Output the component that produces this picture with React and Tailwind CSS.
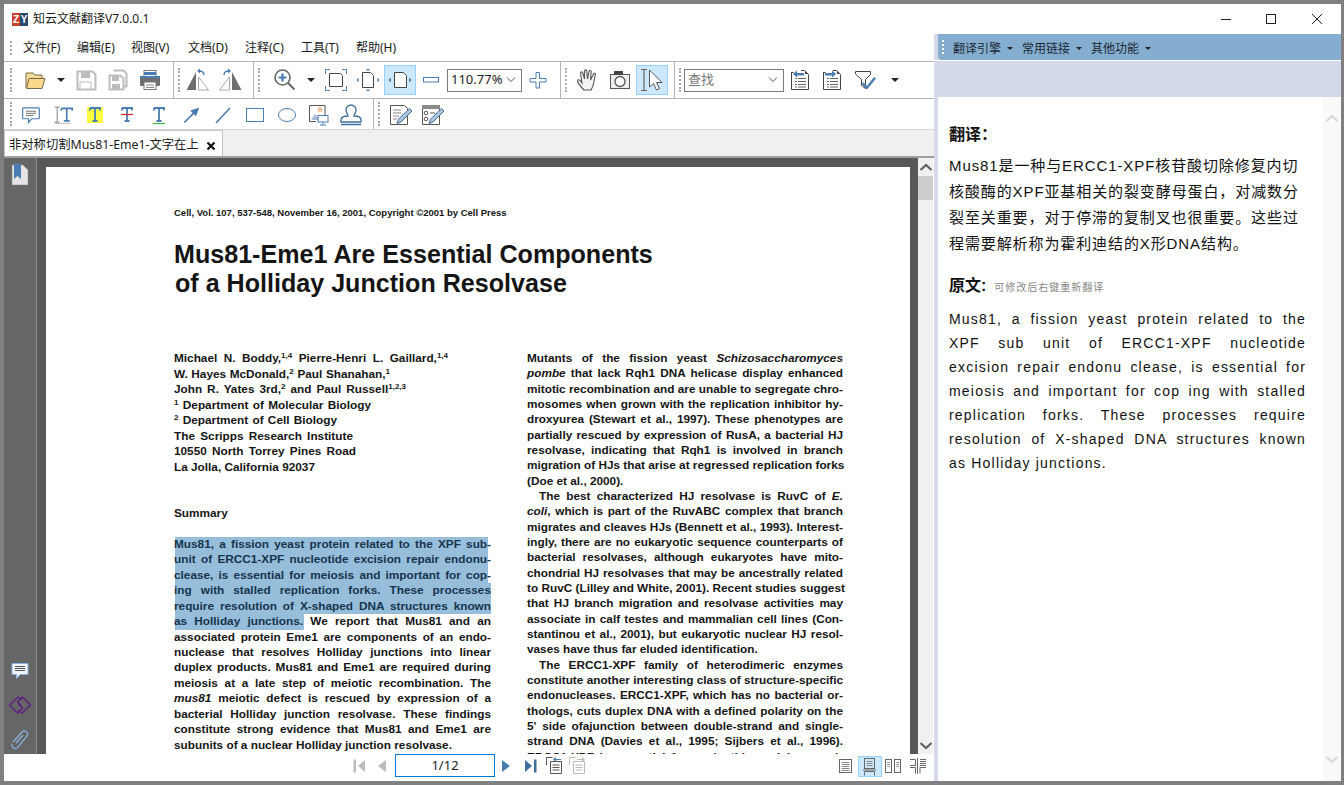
import React from "react";

const B = "#4a7db3";

function Ico({ children, w = 24, h = 24, s, className = "" }) {
  return (
    <svg width={s || w} height={s || h} viewBox={`0 0 ${w} ${h}`} fill="none" className={className}>
      {children}
    </svg>
  );
}

const Grip = ({ className = "" }) => (
  <div className={`h-[24px] w-0 shrink-0 border-l-2 border-dotted border-[#a8a8a8] ${className}`} />
);
const Sep = () => <div className="w-[1px] self-stretch shrink-0 bg-[#b4b4b4]" />;
const Caret = () => (
  <div className="flex h-[30px] w-[19px] shrink-0 items-center justify-center">
    <div className="h-0 w-0 border-x-[4px] border-t-[4px] border-x-transparent border-t-[#222]" />
  </div>
);
const Btn = ({ children, active }) => (
  <div
    className={`flex h-[30px] w-[32px] shrink-0 items-center justify-center ${
      active ? "border border-[#99d1ff] bg-[#cce8ff]" : ""
    }`}
  >
    {children}
  </div>
);

const IOpen = () => (
  <Ico>
    <path d="M3 20V5h7l2 2h7v3" stroke="#7a6a48" fill="#f3dc9a" strokeWidth="1" />
    <path d="M3.500 20.500 6 10.500h16l-3 10z" fill="#fbd98a" stroke="#7a6a48" strokeWidth="1" />
  </Ico>
);
const ISave = ({ c = "#bdbdbd" }) => (
  <Ico>
    <path d="M3.500 3.500h15l3 3v15h-18z" stroke={c} strokeWidth="2" />
    <rect x="7" y="4" width="9" height="6" fill={c} />
    <rect x="6" y="14" width="11" height="7" fill="#fff" stroke={c} />
  </Ico>
);
const ISaveAll = () => (
  <Ico>
    <path d="M7.500 2.500h10l3 3v13h-3" stroke="#bdbdbd" strokeWidth="2" />
    <path d="M3.500 7.500h11l3 3v11h-14z" stroke="#bdbdbd" strokeWidth="2" fill="#fff" />
    <rect x="6" y="8" width="7" height="5" fill="#bdbdbd" />
    <rect x="6" y="16" width="8" height="5" fill="#bdbdbd" />
  </Ico>
);
const IPrint = () => (
  <Ico>
    <rect x="6" y="2.500" width="12" height="6" fill="#fff" stroke="#777" />
    <rect x="6" y="4" width="12" height="3" fill={B} />
    <rect x="2" y="8" width="20" height="10" rx="1.500" fill="#6f6f6f" />
    <rect x="2" y="8" width="20" height="2" fill={B} />
    <rect x="6" y="14" width="12" height="7.500" fill="#fff" stroke="#777" />
    <path d="M8 17h8M8 19.500h8" stroke="#888" />
  </Ico>
);
const IRot = ({ flip }) => (
  <Ico w={26} h={26}>
    <g transform={flip ? "matrix(-1 0 0 1 26 0)" : undefined}>
      <path d="M11 5v18H1.500z" fill="#6e6e6e" />
      <path d="M13.500 10v13h10z" fill="#fff" stroke="#aaa" />
      <path d="M19 8c0-3-2-4-5-4" stroke={B} strokeWidth="1.300" />
      <path d="M15 1.500 12 4l3 2.500z" fill={B} />
    </g>
  </Ico>
);
const IZoom = () => (
  <Ico>
    <circle cx="9.500" cy="9.500" r="7.500" stroke="#666" strokeWidth="1.600" fill="#fff" />
    <path d="M5.500 9.500h8M9.500 5.500v8" stroke={B} strokeWidth="2.200" />
    <path d="m15 15 6.500 6.500" stroke="#666" strokeWidth="2" />
  </Ico>
);
const IFit = () => (
  <Ico>
    <path d="M7 5.500h9.500l2 2v11H5.500V5.500z" stroke="#444" fill="#fff" />
    <path d="M1.500 6V1.500H6M18 1.500h4.500V6M22.500 18v4.500H18M6 22.500H1.500V18" stroke={B} />
  </Ico>
);
const IFitH = () => (
  <Ico>
    <path d="M6.500 4.500h8l3 3v12h-11z" stroke="#444" fill="#fff" />
    <path d="M12 .5 9.500 2.500h5zM12 23.500l-2.500-2h5zM.5 12l2-2.500v5zM23.500 12l-2-2.500v5z" fill={B} />
  </Ico>
);
const IFitW = () => (
  <Ico>
    <path d="M6.500 4.500h9l3 3v12h-12z" stroke="#444" fill="#fff" />
    <path d="M.5 12l2.500-2.500v5zM23.500 12l-2.500-2.500v5z" fill={B} />
  </Ico>
);
const IMinus = () => (
  <Ico w={20} h={10}>
    <rect x="1.500" y="2.500" width="15" height="4.500" fill="#fff" stroke={B} />
  </Ico>
);
const IPlus = () => (
  <Ico w={18} h={18}>
    <path d="M6.500 1h3.500v6h6.500v3.500H10v6H6.500v-6H.5V7h6z" fill="#fff" stroke={B} transform="translate(.5 .5)" />
  </Ico>
);
const IHand = () => (
  <Ico>
    <path
      d="M8 22c-2-2-6-7-6.500-9 0-1.500 1.500-1.500 2.500-.5l2 2.500L4.500 5c0-1.500 2-1.500 2.300 0L8.500 11 8.500 3c0-1.500 2.200-1.500 2.300 0l.7 8L13 3.500c.3-1.500 2.300-1.200 2.200.3L14.500 12l3-6c.7-1.300 2.300-.7 1.800.7L17.500 16c-.5 2.500-1.500 4-2.500 6z"
      fill="#f4f4f4"
      stroke="#555"
      strokeWidth="1.100"
    />
  </Ico>
);
const ICam = () => (
  <Ico>
    <rect x="2.500" y="6.500" width="19" height="14" fill="#eee" stroke="#555" />
    <rect x="6" y="3" width="9" height="4" fill="#444" />
    <circle cx="12" cy="13.500" r="5" fill="#fff" stroke="#555" strokeWidth="1.300" />
  </Ico>
);
const ISel = () => (
  <Ico w={26} h={26}>
    <path d="M2 2.500h6M2 23.500h6M5 2.500v21" stroke="#666" strokeWidth="1.200" />
    <path d="M10.500 3v17l4-3.500 3 6.500 3-1.500-3-6H23z" fill="#fff" stroke="#555" />
  </Ico>
);
const IDoc = ({ right }) => (
  <Ico w={20} h={22}>
    <path d="M1.500 3.500h2M11 1.500h3.500l4 4v15h-17V3" stroke="#444" fill="#fff" />
    <path d="M15 1.500v3.500h3.500z" fill="#444" />
    <path d="M5 9.500h11M5 12.500h11M5 15.500h11M5 18h11" stroke="#666" strokeDasharray="2 1 8" />
    <path d={right ? "M3 4h7V1.500L14 5l-4 3.500V6.500H3z" : "M14 4H7V1.500L3 5l4 3.500V6.500h7z"} fill={B} />
  </Ico>
);
const IFilter = () => (
  <Ico w={24} h={22}>
    <path d="M.5 2.500h15v3l-5 5v9l-4-3v-6l-6-5.500z" fill="#fff" stroke="#444" transform="translate(1 0)" />
    <path d="m9 13 4 4 7-9 2 1.500-9 11-5-5z" fill={B} />
  </Ico>
);
const INote = () => (
  <Ico s={20}>
    <path d="M3 3.500h18a1 1 0 0 1 1 1v11a1 1 0 0 1-1 1H13l-4 4.500v-4.500H3a1 1 0 0 1-1-1v-11a1 1 0 0 1 1-1z" fill="#fff" stroke={B} strokeWidth="1.400" />
    <path d="M6 7.500h12M6 10h12M6 12.500h9" stroke="#555" />
  </Ico>
);
const IIText = () => (
  <Ico w={24} h={24} s={20}>
    <path d="M2 2.500h6M2 20.500h6M5 3v17" stroke="#6a6a6a" />
    <path d="M10 4h13v3M16.500 4v15M13 19h7M10 7V4" stroke={B} strokeWidth="2" />
    <path d="M2 22h20" stroke="#6a6a6a" strokeDasharray="1 1" />
  </Ico>
);
const ITee = ({ c = B }) => (
  <path d="M7 5h10v2.500M7 5v2.500M12 5v13M9.500 18h5" stroke={c} strokeWidth="1.800" />
);
const IHi = () => (
  <div className="flex h-[16px] w-[16px] items-center justify-center bg-[#ffff40]">
    <Ico w={16} h={16}>
      <g transform="translate(-4 -4)"><ITee /></g>
    </Ico>
  </div>
);
const IStrike = () => (
  <Ico>
    <ITee />
    <path d="M6 11.500h12" stroke="#e02020" strokeWidth="1.200" />
  </Ico>
);
const IUnder = () => (
  <Ico>
    <ITee />
    <path d="M6 20.500h12" stroke="#3cb043" strokeWidth="1.200" />
  </Ico>
);
const IArrow = () => (
  <Ico s={20}>
    <path d="m4 21 13-13" stroke={B} strokeWidth="2" />
    <path d="M22 3 11 6.500l7 7z" fill={B} />
  </Ico>
);
const ILine = () => (
  <Ico>
    <path d="m5 20 14-15" stroke={B} strokeWidth="1.600" />
  </Ico>
);
const IRect = () => (
  <Ico>
    <rect x="3.500" y="5.500" width="17" height="13" stroke={B} />
  </Ico>
);
const IEll = () => (
  <Ico>
    <ellipse cx="12" cy="12" rx="8.500" ry="6.500" stroke={B} />
  </Ico>
);
const IImg = () => (
  <Ico>
    <path d="M2.500 2.500h15.500v11M9 18.500H2.500v-16" stroke="#555" fill="#fff" />
    <circle cx="13" cy="6.500" r="2.500" fill="#efc49b" />
    <path d="M4 17l4-6 3 4v2z" fill="#a5bfd8" />
    <rect x="11" y="12.500" width="10" height="6.500" fill="#fff" stroke={B} />
    <path d="M16 19v3M13 22h6" stroke={B} />
  </Ico>
);
const IStamp = () => (
  <Ico>
    <path d="M9 13c0-2-2-3-2-6a5 5 0 0 1 10 0c0 3-2 4-2 6 3 0 7 1 7 4v2H2v-2c0-3 4-4 7-4z" fill="#fff" stroke="#3d6f9c" strokeWidth="1.300" />
    <path d="M2 21.500h20" stroke="#3d6f9c" strokeWidth="1.500" />
  </Ico>
);
const IEdit = ({ form }) => (
  <Ico>
    <path d="M2.500 2.500h14l3 3v16h-17z" fill="#fff" stroke="#555" />
    {form ? (
      <>
        <rect x="2" y="2" width="18" height="4" fill="#8a8a8a" />
        <circle cx="6" cy="10" r="1.800" stroke="#555" />
        <circle cx="6" cy="16" r="1.800" stroke="#555" />
        <path d="M10 10h5" stroke="#555" />
      </>
    ) : (
      <path d="M5 7h8M5 10h8M5 13h6M5 16h4" stroke="#888" />
    )}
    <path d="M21.500 5.500 24 8 13 19l-4 1.500L10.500 16z" fill="#a9c5e2" stroke="#4a6f96" />
  </Ico>
);

const Combo = ({ w, children, gray }) => (
  <div
    className={`flex h-[23px] shrink-0 items-center justify-between border border-[#7a7a7a] pl-[3px] pr-[3px] text-[13px] ${
      gray ? "text-[#777]" : "text-[#222]"
    } ${w}`}
  >
    <span>{children}</span>
    <svg width="14" height="8" viewBox="0 0 14 8" fill="none">
      <path d="m3 1.500 4 4 4-4" stroke="#555" />
    </svg>
  </div>
);

function L({ children, last, indent, hl, dark }) {
  return (
    <div
      className={`relative h-[15.4px] whitespace-nowrap leading-[15.4px] ${last ? "" : "[text-align-last:justify]"} ${
        indent ? "pl-[12px]" : ""
      } ${dark ? "text-[#17344d]" : ""}`}
    >
      {hl ? <div className="absolute left-[1px] top-0 h-full bg-[#96bdd9]" style={{ width: hl }} /> : null}
      <span className="relative">{children}</span>
    </div>
  );
}

const S = ({ children }) => <sup className="text-[8px]">{children}</sup>;

function Page() {
  return (
    <div className="h-full overflow-hidden bg-white pl-[128px] font-['Liberation_Sans',Arial,sans-serif] font-bold text-[#151515]">
      <div className="pt-[41px] text-[9.500px] leading-[10px]">
        Cell, Vol. 107, 537-548, November 16, 2001, Copyright ©2001 by Cell Press
      </div>
      <div className="mt-[22px] text-[25.100px] leading-[29px]">
        <div>Mus81-Eme1 Are Essential Components</div>
        <div className="pl-[1px]">of a Holliday Junction Resolvase</div>
      </div>
      <div className="mt-[53px] flex text-[11.800px]">
        <div className="w-[317px]">
          <div className="w-[274px] [&>div]:h-[15.55px] [&>div]:leading-[15.55px]">
            <L>
              Michael N. Boddy,<S>1,4</S> Pierre-Henri L. Gaillard,<S>1,4</S>
            </L>
            <div className="w-[216px] whitespace-nowrap [text-align-last:justify]">
              W. Hayes McDonald,<S>2</S> Paul Shanahan,<S>1</S>
            </div>
            <div className="w-[232px] whitespace-nowrap [text-align-last:justify]">
              John R. Yates 3rd,<S>2</S> and Paul Russell<S>1,2,3</S>
            </div>
            <div className="w-[197px] whitespace-nowrap [text-align-last:justify]"><S>1</S> Department of Molecular Biology</div>
            <div className="w-[163px] whitespace-nowrap [text-align-last:justify]"><S>2</S> Department of Cell Biology</div>
            <div className="w-[179px] [text-align-last:justify]">The Scripps Research Institute</div>
            <div className="w-[182px] [text-align-last:justify]">10550 North Torrey Pines Road</div>
            <div>La Jolla, California 92037</div>
          </div>
          <div className="mt-[31px] leading-[15.400px]">Summary</div>
          <div className="mt-[15px] [&>div]:h-[15.46px] [&>div]:leading-[15.46px]">
            <L dark hl={313}>Mus81, a fission yeast protein related to the XPF sub-</L>
            <L dark hl={313}>unit of ERCC1-XPF nucleotide excision repair endonu-</L>
            <L dark hl={313}>clease, is essential for meiosis and important for cop-</L>
            <L dark hl={316}>ing with stalled replication forks. These processes</L>
            <L dark hl={316}>require resolution of X-shaped DNA structures known</L>
            <L hl={129}><span className="text-[#17344d]">as Holliday junctions.</span> We report that Mus81 and an</L>
            <L>associated protein Eme1 are components of an endo-</L>
            <L>nuclease that resolves Holliday junctions into linear</L>
            <L>duplex products. Mus81 and Eme1 are required during</L>
            <L>meiosis at a late step of meiotic recombination. The</L>
            <L><i>mus81</i> meiotic defect is rescued by expression of a</L>
            <L>bacterial Holliday junction resolvase. These findings</L>
            <L>constitute strong evidence that Mus81 and Eme1 are</L>
            <L last>subunits of a nuclear Holliday junction resolvase.</L>
          </div>
        </div>
        <div className="ml-[36px] w-[316px] [&>div]:h-[15.33px] [&>div]:leading-[15.33px]">
          <L>Mutants of the fission yeast <i>Schizosaccharomyces</i></L>
          <L><i>pombe</i> that lack Rqh1 DNA helicase display enhanced</L>
          <L>mitotic recombination and are unable to segregate chro-</L>
          <L>mosomes when grown with the replication inhibitor hy-</L>
          <L>droxyurea (Stewart et al., 1997). These phenotypes are</L>
          <L>partially rescued by expression of RusA, a bacterial HJ</L>
          <L>resolvase, indicating that Rqh1 is involved in branch</L>
          <L>migration of HJs that arise at regressed replication forks</L>
          <L last>(Doe et al., 2000).</L>
          <L indent>The best characterized HJ resolvase is RuvC of <i>E.</i></L>
          <L><i>coli</i>, which is part of the RuvABC complex that branch</L>
          <L>migrates and cleaves HJs (Bennett et al., 1993). Interest-</L>
          <L>ingly, there are no eukaryotic sequence counterparts of</L>
          <L>bacterial resolvases, although eukaryotes have mito-</L>
          <L>chondrial HJ resolvases that may be ancestrally related</L>
          <L>to RuvC (Lilley and White, 2001). Recent studies suggest</L>
          <L>that HJ branch migration and resolvase activities may</L>
          <L>associate in calf testes and mammalian cell lines (Con-</L>
          <L>stantinou et al., 2001), but eukaryotic nuclear HJ resol-</L>
          <L last>vases have thus far eluded identification.</L>
          <L indent>The ERCC1-XPF family of heterodimeric enzymes</L>
          <L>constitute another interesting class of structure-specific</L>
          <L>endonucleases. ERCC1-XPF, which has no bacterial or-</L>
          <L>thologs, cuts duplex DNA with a defined polarity on the</L>
          <L>5' side ofajunction between double-strand and single-</L>
          <L>strand DNA (Davies et al., 1995; Sijbers et al., 1996).</L>
          <L>ERCC1-XPF is essential for nucleotide excision repair</L>
        </div>
      </div>
    </div>
  );
}

const Arrow = ({ dir, c, bar }) => (
  <Ico w={14} h={16}>
    <g transform={dir === "l" ? "matrix(-1 0 0 1 14 0)" : undefined}>
      <path d={bar ? "M1 2l7 6-7 6z" : "M3 2l8 6-8 6z"} fill={c} />
      {bar ? <path d="M10 1.500h2.500v13H10z" fill={c} /> : null}
    </g>
  </Ico>
);

const PageCopy = ({ c, left }) => (
  <Ico w={18} h={18}>
    <path d="M1.500 9V1.500h6" stroke={c} />
    <path d="M5.500 5.500h11v12h-11z" stroke={c} fill="#fff" />
    <path d="M7.500 9h7M7.500 11.500h7M7.500 14h7" stroke={c} />
    <path d={left ? "M16 3h-5V1L8 3.500 11 6V4h5z" : "M9 3h5V1l3 2.500L14 6V4H9z"} fill={left ? B : "#bbb"} />
  </Ico>
);

const ViewIcon = ({ kind }) => (
  <Ico w={18} h={18}>
    {kind === 0 && (
      <>
        <rect x="2.500" y="2.500" width="12" height="13" stroke="#666" />
        <path d="M4.500 5.500h8M4.500 7.500h8M4.500 9.500h8M4.500 11.500h8M4.500 13.500h8" stroke="#888" />
      </>
    )}
    {kind === 1 && (
      <>
        <rect x="3.500" y=".5" width="10" height="10" stroke="#666" />
        <path d="M5.500 3.500h6M5.500 5.500h6M5.500 7.500h6" stroke="#888" />
        <path d="M3.500 13.500h10v4" stroke="#666" />
        <path d="M3.500 17.500v-4M2 12h13" stroke="#666" />
      </>
    )}
    {kind === 2 && (
      <>
        <rect x="1.500" y="2.500" width="6" height="13" stroke="#666" />
        <rect x="10.500" y="2.500" width="6" height="13" stroke="#666" />
        <path d="M3 5.500h3M3 7.500h3M3 9.500h3M12 5.500h3M12 7.500h3M12 9.500h3" stroke="#999" />
      </>
    )}
    {kind === 3 && (
      <path d="M1 2.500h5.500v6H1M17 2.500h-6M17 4.500h-6M17 6.500h-6M17 8.500h-6M1 10.500h5.500v6M11 10.500v6M11 10.500h6M8.500 1v16" stroke="#666" />
    )}
  </Ico>
);

const Drop = ({ children }) => (
  <div className="mr-[9px] flex items-center pt-[3px] text-[12px] text-[#1b2733]">
    <span>{children}</span>
    <div className="ml-[6px] h-0 w-0 border-x-[3px] border-t-[3px] border-x-transparent border-t-[#222]" />
  </div>
);

const Chevron = ({ up }) => (
  <svg width="14" height="10" viewBox="0 0 14 10" fill="none">
    <path d={up ? "m1.500 8 5.500-5 5.500 5" : "m1.500 2 5.500 5 5.500-5"} stroke="currentColor" strokeWidth="2.200" />
  </svg>
);

export default function App() {
  return (
    <div className="flex h-[785px] w-[1344px] flex-col overflow-hidden bg-[#808080] pb-[4px] pl-[4px] pr-[3px] pt-[4px] font-['Noto_Sans','Noto_Sans_CJK_SC',sans-serif] text-[12px] text-[#1a1a1a]">
      {/* title bar */}
      <div className="flex h-[30px] shrink-0 items-center bg-white pl-[8px]">
        <div className="flex h-[13px] w-[16px] overflow-hidden font-['Liberation_Sans',sans-serif] text-[10px] font-bold leading-[13px] text-white">
          <span className="w-[8px] bg-[#c9412c] text-center">Z</span>
          <span className="w-[8px] bg-[#26486f] text-center">Y</span>
        </div>
        <span className="ml-[5px] flex-1">知云文献翻译V7.0.0.1</span>
        <div className="mr-[1px] flex h-full">
          <div className="flex w-[45px] items-center justify-center">
            <div className="h-[1px] w-[10px] bg-[#222]" />
          </div>
          <div className="flex w-[46px] items-center justify-center">
            <div className="h-[10px] w-[10px] border border-[#222]" />
          </div>
          <div className="flex w-[46px] items-center justify-center">
            <svg width="12" height="12" viewBox="0 0 12 12" fill="none">
              <path d="m1 1 10 10M11 1 1 11" stroke="#222" />
            </svg>
          </div>
        </div>
      </div>

      <div className="flex min-h-0 flex-1">
        {/* left pane */}
        <div className="flex w-[930px] shrink-0 flex-col bg-white">
          {/* menu */}
          <div className="flex h-[28px] shrink-0 items-center border-b border-[#b4b4b4] pl-[6px]">
            <Grip className="!h-[14px]" />
            <span className="ml-[11px] w-[54px]">文件(F)</span>
            <span className="w-[54px]">编辑(E)</span>
            <span className="w-[57px]">视图(V)</span>
            <span className="w-[57px]">文档(D)</span>
            <span className="w-[56px]">注释(C)</span>
            <span className="w-[55px]">工具(T)</span>
            <span>帮助(H)</span>
          </div>
          {/* toolbar 1 */}
          <div className="flex h-[37px] shrink-0 items-center border-b border-[#b4b4b4] pl-[6px]">
            <Grip />
            <div className="ml-[7px] flex items-center">
              <Btn><IOpen /></Btn>
              <Caret />
              <Btn><ISave /></Btn>
              <Btn><ISaveAll /></Btn>
              <Btn><IPrint /></Btn>
            </div>
            <div className="ml-[7px] flex items-center self-stretch"><Sep /></div>
            <Grip className="ml-[4px]" />
            <div className="ml-[2px] flex items-center">
              <Btn><IRot /></Btn>
              <Btn><IRot flip /></Btn>
            </div>
            <div className="ml-[7px] flex self-stretch"><Sep /></div>
            <Grip className="ml-[4px]" />
            <div className="ml-[9px] flex items-center">
              <Btn><IZoom /></Btn>
              <Caret />
              <Btn><IFit /></Btn>
              <Btn><IFitH /></Btn>
              <Btn active><IFitW /></Btn>
              <Btn><IMinus /></Btn>
              <div className="-ml-[1px]"><Combo w="w-[75px]">110.77%</Combo></div>
              <Btn><IPlus /></Btn>
            </div>
            <div className="ml-[6px] flex self-stretch"><Sep /></div>
            <Grip className="ml-[4px]" />
            <div className="ml-[5px] flex items-center">
              <Btn><IHand /></Btn>
              <Btn><ICam /></Btn>
              <Btn active><ISel /></Btn>
            </div>
            <div className="ml-[6px] flex self-stretch"><Sep /></div>
            <Grip className="ml-[4px]" />
            <div className="ml-[3px] flex items-center">
              <Combo w="w-[100px]" gray>查找</Combo>
              <Btn><IDoc /></Btn>
              <Btn><IDoc right /></Btn>
              <div className="ml-[2px]"><Btn><IFilter /></Btn></div>
              <div className="ml-[3px]"><Caret /></div>
            </div>
          </div>
          {/* toolbar 2 */}
          <div className="flex h-[31px] shrink-0 items-center border-b border-[#d8d8d8] pl-[6px]">
            <Grip />
            <div className="ml-[3px] flex items-center pt-[1px]">
              <Btn><INote /></Btn>
              <Btn><IIText /></Btn>
              <Btn><IHi /></Btn>
              <Btn><IStrike /></Btn>
              <Btn><IUnder /></Btn>
              <Btn><IArrow /></Btn>
              <Btn><ILine /></Btn>
              <Btn><IRect /></Btn>
              <Btn><IEll /></Btn>
              <Btn><IImg /></Btn>
              <Btn><IStamp /></Btn>
            </div>
            <div className="ml-[6px] flex self-stretch"><Sep /></div>
            <Grip className="ml-[4px]" />
            <div className="ml-[4px] flex items-center pt-[1px]">
              <Btn><IEdit /></Btn>
              <Btn><IEdit form /></Btn>
            </div>
          </div>
          {/* tab strip */}
          <div className="flex h-[28px] shrink-0 items-end border-b-2 border-[#a0a0a0] bg-[#f0f0f0]">
            <div className="flex h-[26px] w-[219px] items-center border border-b-0 border-[#c8c8c8] bg-white pl-[4px] pt-[4px] text-[12.300px]">
              <span className="flex-1">非对称切割Mus81-Eme1-文字在上</span>
              <svg className="mr-[6px]" width="10" height="10" viewBox="0 0 10 10" fill="none">
                <path d="m1.500 1.500 7 7M8.500 1.500l-7 7" stroke="#111" strokeWidth="2.200" />
              </svg>
            </div>
          </div>
          {/* doc area */}
          <div className="flex min-h-0 flex-1">
            <div className="flex w-[33px] shrink-0 flex-col items-center border-r border-[#8c8c8c] bg-[#666666]">
              <svg className="mt-[5px]" width="18" height="24" viewBox="0 0 18 24" fill="none">
                <path d="M1 2h11l5 5v15H1z" fill="#e4e4e4" stroke="#888" strokeWidth=".5" />
                <path d="M3 2c0-2 7-2 7 0v14l-3.500-3L3 16z" fill="#4a7db3" />
              </svg>
              <div className="flex-1" />
              <svg className="mb-[16px]" width="18" height="18" viewBox="0 0 18 18" fill="none">
                <path d="M1 1.500h16v11H9l-3.500 4v-4H1z" fill="#eef3f9" stroke="#88b2de" />
                <path d="M4 4.500h10M4 6.500h10M4 8.500h10" stroke="#555" />
              </svg>
              <svg className="mb-[15px]" width="24" height="18" viewBox="0 0 24 18" fill="none">
                <path d="M14 4 10 1 1.500 9l8 8 5-5-4-4" stroke="#5c1e80" strokeWidth="1.300" />
                <path d="M10 14l4 3 8.500-8-8-8-5 5 4 4" stroke="#5c1e80" strokeWidth="1.300" />
              </svg>
              <svg className="mb-[3px]" width="20" height="22" viewBox="0 0 20 22" fill="none">
                <path d="M3 13 12 3c3-3 7 1 5 4l-9 11c-2 3-7 1-6-3M6 14l7-8" stroke="#88b2de" strokeWidth="1.200" />
              </svg>
            </div>
            <div className="flex min-w-0 flex-1 flex-col bg-[#585858] pl-[9px] pr-[8px] pt-[9px]">
              <div className="min-h-0 flex-1">
                <Page />
              </div>
            </div>
            <div className="flex w-[15px] shrink-0 flex-col items-center bg-[#f0f0f0] text-[#606060]">
              <div className="flex h-[18px] items-center"><Chevron up /></div>
              <div className="h-[24px] w-full bg-[#cdcdcd]" />
              <div className="flex-1" />
              <div className="flex h-[16px] items-center"><Chevron /></div>
            </div>
            <div className="w-[1px] bg-white" />
          </div>
          {/* bottom nav */}
          <div className="flex h-[27px] shrink-0 items-start bg-white">
            <div className="ml-[348px] mt-[4px]"><Arrow dir="l" c="#bcbcbc" bar /></div>
            <div className="ml-[9px] mt-[4px]"><Arrow dir="l" c="#bcbcbc" /></div>
            <div className="ml-[6px] flex h-[23px] w-[100px] items-center justify-center border border-[#0078d7] text-[13px] text-[#222]">1/12</div>
            <div className="ml-[4px] mt-[4px]"><Arrow c="#4a7db3" /></div>
            <div className="ml-[11px] mt-[4px]"><Arrow c="#3d6f9c" bar /></div>
            <div className="ml-[7px] mt-[2px]"><PageCopy c="#555" left /></div>
            <div className="ml-[5px] mt-[2px]"><PageCopy c="#bbb" /></div>
            <div className="ml-[251px] mt-[3px]"><ViewIcon kind={0} /></div>
            <div className="ml-[3px] mt-[2px] flex h-[21px] w-[24px] items-center justify-center border border-[#99d1ff] bg-[#cce8ff]"><ViewIcon kind={1} /></div>
            <div className="ml-[2px] mt-[3px]"><ViewIcon kind={2} /></div>
            <div className="ml-[7px] mt-[3px]"><ViewIcon kind={3} /></div>
          </div>
        </div>

        {/* right pane */}
        <div className="flex min-w-0 flex-1 flex-col bg-[#d4daec] pl-[4px]">
          <div className="flex h-[26px] shrink-0 items-center rounded-bl-[4px] bg-[#85adcf] pl-[4px]">
            <div className="mr-[9px] h-[14px] w-0 border-l-2 border-dotted border-white" />
            <Drop>翻译引擎</Drop>
            <Drop>常用链接</Drop>
            <Drop>其他功能</Drop>
          </div>
          <div className="-ml-[4px] h-[1px] shrink-0 bg-white" />
          <div className="h-[36px] shrink-0" />
          <div className="flex min-h-0 flex-1 bg-white">
            <div className="min-w-0 flex-1 pl-[11px] pr-[17px] font-['Liberation_Sans','Noto_Sans_CJK_SC',sans-serif] text-[#111]">
              <div className="mt-[27px] text-[16px] font-bold leading-[22px]">翻译：</div>
              <div className="mt-[7px] whitespace-nowrap text-[15px] leading-[26px] tracking-[0.900px]">
                Mus81是一种与ERCC1-XPF核苷酸切除修复内切<br />
                核酸酶的XPF亚基相关的裂变酵母蛋白，对减数分<br />
                裂至关重要，对于停滞的复制叉也很重要。这些过<br />
                程需要解析称为霍利迪结的X形DNA结构。
              </div>
              <div className="mt-[18px] flex items-center">
                <span className="text-[16px] font-bold leading-[22px]">原文:</span>
                <span className="ml-[8px] pt-[3px] text-[10px] tracking-[1px] text-[#888]">可修改后右键重新翻译</span>
              </div>
              <div className="mt-[10px] text-[14px] leading-[24px] tracking-[1.200px]">
                {[
                  "Mus81, a fission yeast protein related to the",
                  "XPF sub unit of ERCC1-XPF nucleotide",
                  "excision repair endonu clease, is essential for",
                  "meiosis and important for cop ing with stalled",
                  "replication forks. These processes require",
                  "resolution of X-shaped DNA structures known",
                ].map((t) => (
                  <div key={t} className="[text-align-last:justify]">{t}</div>
                ))}
                <div>as Holliday junctions.</div>
              </div>
            </div>
            <div className="flex w-[18px] shrink-0 flex-col items-center justify-between bg-[#f9f9f9] py-[16px] text-[#d8d8d8]">
              <Chevron up />
              <Chevron />
            </div>
          </div>
        </div>
      </div>
    </div>
  );
}
